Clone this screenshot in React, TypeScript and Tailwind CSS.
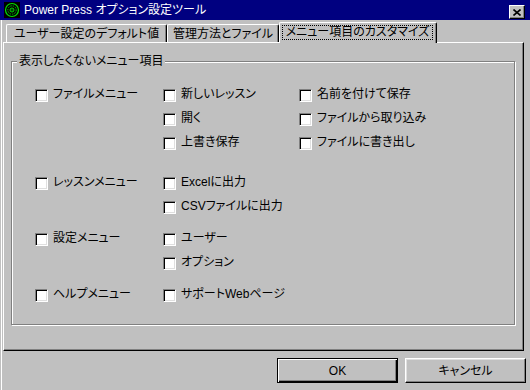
import React from "react";

const F = "font-['Liberation_Sans','Noto_Sans_CJK_JP',sans-serif] [font-feature-settings:'palt'] text-[12px]";

function Box() {
  return (
    <div className="w-[13px] h-[13px] shrink-0 bg-white border border-t-[#808080] border-l-[#808080] border-r-white border-b-white shadow-[inset_1px_1px_0_#000,inset_-1px_-1px_0_#dfdfdf]" />
  );
}

function Item({ label }: { label: string }) {
  return (
    <div className="flex items-center gap-[5px] h-[13px]">
      <Box />
      <span className="leading-[13px] mb-[2px] whitespace-nowrap text-black">{label}</span>
    </div>
  );
}

const sections = [
  {
    main: "ファイルメニュー",
    c2: ["新しいレッスン", "開く", "上書き保存"],
    c3: ["名前を付けて保存", "ファイルから取り込み", "ファイルに書き出し"],
    mt: "",
  },
  { main: "レッスンメニュー", c2: ["Excelに出力", "CSVファイルに出力"], c3: [], mt: "mt-[27px]" },
  { main: "設定メニュー", c2: ["ユーザー", "オプション"], c3: [], mt: "mt-[19px]" },
  { main: "ヘルプメニュー", c2: ["サポートWebページ"], c3: [], mt: "mt-[19px]" },
];

function Icon() {
  return (
    <svg width="16" height="16" viewBox="0 0 16 16">
      <rect width="16" height="16" fill="#000" />
      <circle cx="8" cy="8" r="6.5" fill="none" stroke="#00e000" strokeWidth="1.2" />
      <circle cx="8" cy="8" r="4.2" fill="none" stroke="#00c000" strokeWidth="1" strokeDasharray="1.5 1" />
      <circle cx="8" cy="8" r="2" fill="none" stroke="#00e000" strokeWidth="1" />
      <rect x="7.5" y="7.5" width="1" height="1" fill="#00ff00" />
    </svg>
  );
}

export default function App() {
  return (
    <div className={`w-[530px] h-[390px] bg-[#c0c0c0] overflow-hidden flex flex-col ${F}`}>
      {/* title bar */}
      <div className="h-[20px] bg-[#000080] flex items-start shrink-0">
        <div className="ml-[4px] mt-[2px]">
          <Icon />
        </div>
        <span className="ml-[4px] mt-[1px] leading-[18px] text-white whitespace-nowrap">Power Press オプション設定ツール</span>
        <div className="ml-auto mr-[5px] mt-[5px] w-[16px] h-[14px] bg-[#c0c0c0] border border-t-white border-l-white border-r-black border-b-black shadow-[inset_-1px_-1px_0_#808080] flex items-center justify-center">
          <svg width="8" height="7" viewBox="0 0 8 7">
            <path d="M0.5 0.5 L7.5 6.5 M7.5 0.5 L0.5 6.5" stroke="#000" strokeWidth="1.6" fill="none" />
          </svg>
        </div>
      </div>

      {/* body */}
      <div className="flex-1 ml-[1px] border-l border-white pl-[1px] flex flex-col">
        {/* tabs */}
        <div className="flex items-end pt-[2px] pl-[3px] h-[22px]">
          <div className="w-[161px] h-[18px] border-t border-l border-r border-t-white border-l-white border-r-black shadow-[inset_-1px_0_0_#808080] rounded-t-[2px] flex items-center justify-center leading-[16px] whitespace-nowrap">
            ユーザー設定のデフォルト値
          </div>
          <div className="w-[112px] h-[18px] border-t border-l border-r border-t-white border-l-white border-r-black shadow-[inset_-1px_0_0_#808080] rounded-t-[2px] flex items-center justify-center leading-[16px] whitespace-nowrap">
            管理方法とファイル
          </div>
          <div className="relative z-10 -mb-[1px] w-[158px] h-[21px] bg-[#c0c0c0] border-t border-l border-r border-t-white border-l-white border-r-black shadow-[inset_-1px_0_0_#808080] rounded-t-[2px] flex items-start">
            <div className="ml-[2px] mt-[2px] w-[151px] h-[15px] border border-dotted border-black flex items-center justify-center leading-[13px] whitespace-nowrap">
              メニュー項目のカスタマイズ
            </div>
          </div>
        </div>

        {/* panel */}
        <div className="w-[521px] h-[309px] border border-t-white border-l-white border-r-black border-b-black shadow-[inset_-1px_-1px_0_#808080] pt-[18px] pl-[7px]">
          <div className="relative w-[504px] h-[264px] border border-[#808080] shadow-[1px_1px_0_#fff,inset_1px_1px_0_#fff] pt-[27px] pl-[23px]">
            <div className="absolute -top-[8px] left-[5px] px-[2px] bg-[#c0c0c0] leading-[14px] whitespace-nowrap">
              表示したくないメニュー項目
            </div>
            <div className="flex flex-col">
              {sections.map((s) => (
                <div key={s.main} className={`grid grid-cols-[128px_136px_auto] ${s.mt}`}>
                  <div className="flex flex-col gap-[11px]">
                    <Item label={s.main} />
                  </div>
                  <div className="flex flex-col gap-[11px]">
                    {s.c2.map((l) => (
                      <Item key={l} label={l} />
                    ))}
                  </div>
                  <div className="flex flex-col gap-[11px]">
                    {s.c3.map((l) => (
                      <Item key={l} label={l} />
                    ))}
                  </div>
                </div>
              ))}
            </div>
          </div>
        </div>

        {/* buttons */}
        <div className="flex justify-end gap-[7px] mt-[7px] pr-[4px]">
          <div className="w-[121px] h-[25px] border border-black shadow-[inset_1px_1px_0_#fff,inset_-1px_-1px_0_#000,inset_-2px_-2px_0_#808080] flex items-center justify-center leading-[14px]">
            OK
          </div>
          <div className="w-[121px] h-[25px] border border-t-white border-l-white border-r-black border-b-black shadow-[inset_-1px_-1px_0_#808080,inset_1px_1px_0_#dfdfdf] flex items-center justify-center leading-[14px]">
            キャンセル
          </div>
        </div>
      </div>
    </div>
  );
}
